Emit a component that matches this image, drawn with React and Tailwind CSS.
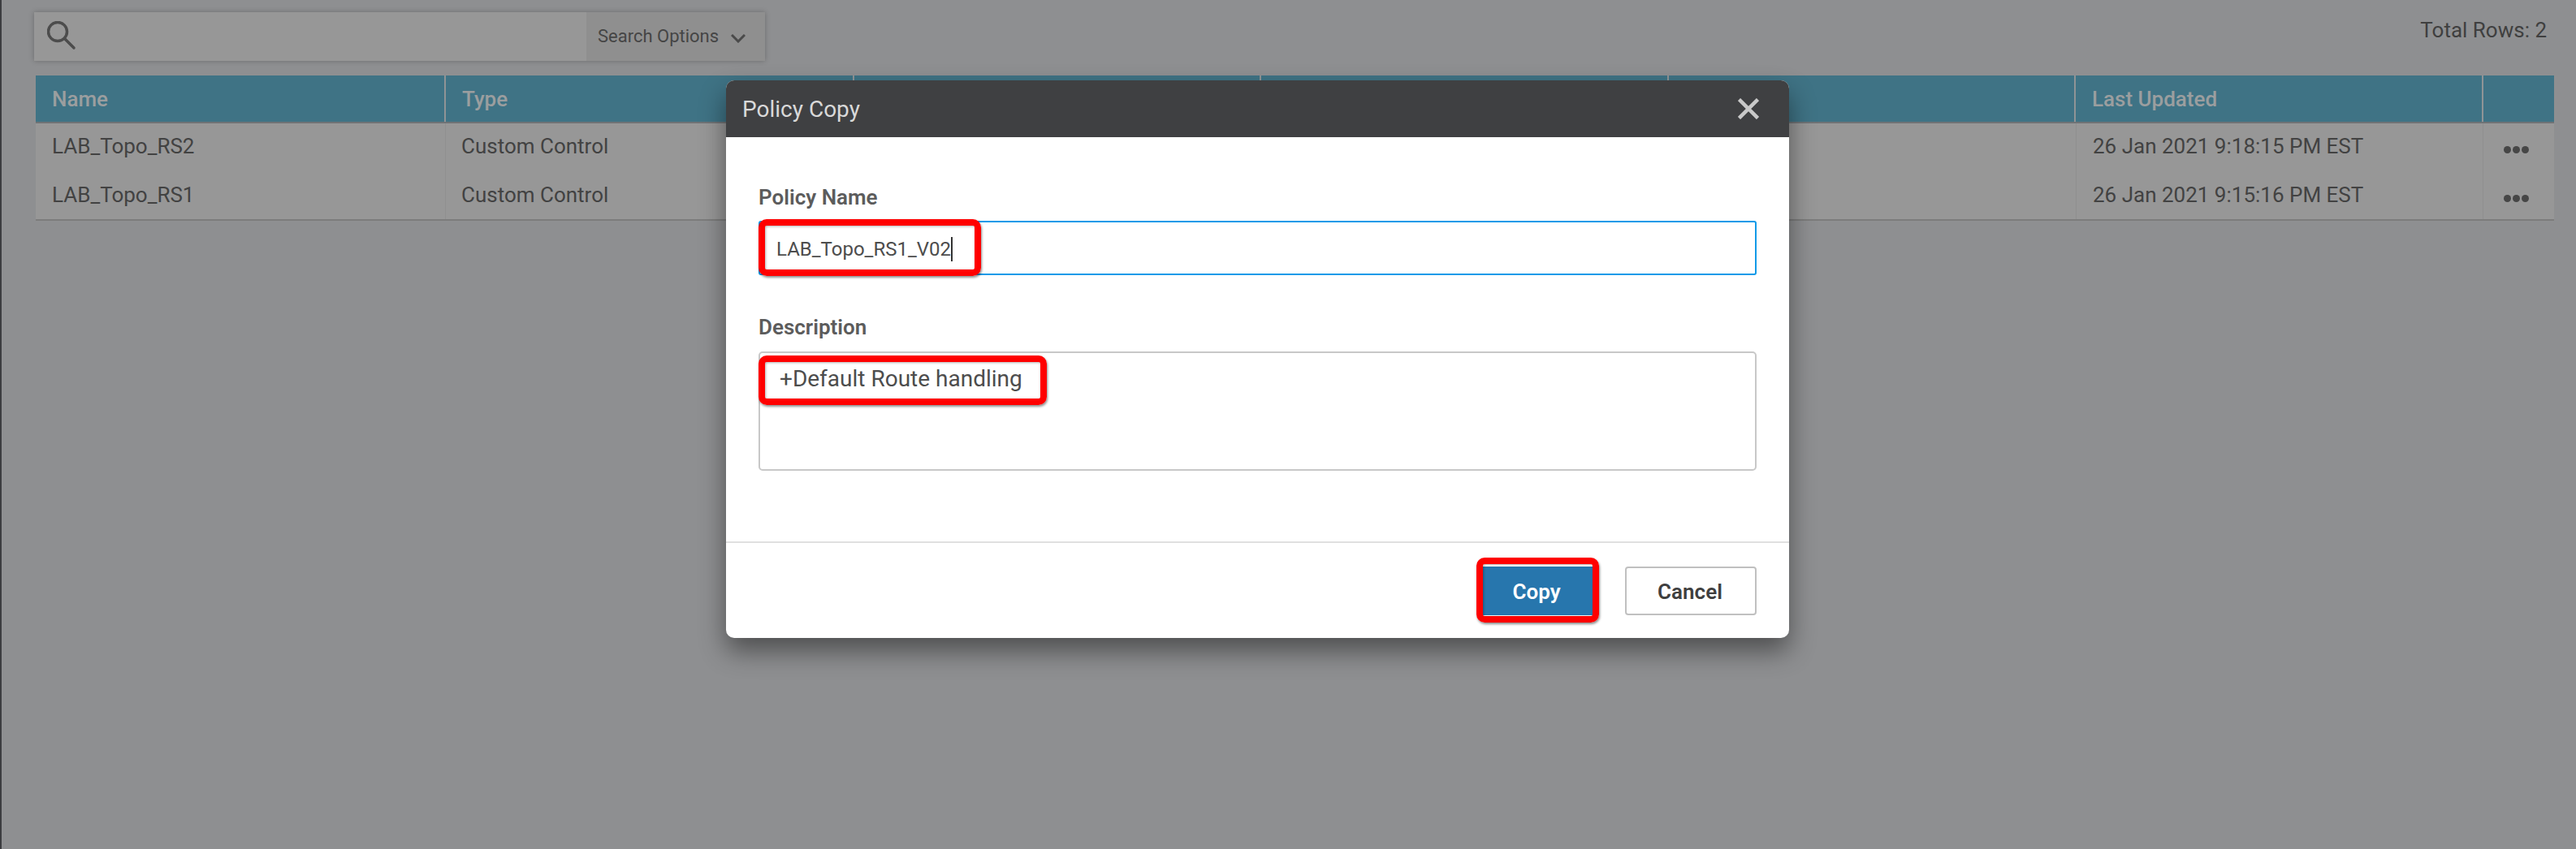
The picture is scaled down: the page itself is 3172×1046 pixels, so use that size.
const columns = ['Name', 'Type', '', '', '', 'Last Updated', '']

const rows = [
  { name: 'LAB_Topo_RS2', type: 'Custom Control', updated: '26 Jan 2021 9:18:15 PM EST' },
  { name: 'LAB_Topo_RS1', type: 'Custom Control', updated: '26 Jan 2021 9:15:16 PM EST' },
]

const grid = 'grid grid-cols-[505px_503px_501px_502px_501px_502px_87px]'

function Callout({ className }) {
  return (
    <div className={`absolute rounded-[10px] border-8 border-[#ff0000] shadow-[1px_2px_3px_rgba(0,0,0,0.45),inset_1px_1px_3px_rgba(0,0,0,0.3)] ${className}`} />
  )
}

function Dots() {
  return (
    <div className="flex gap-[2px] mt-[28px] ml-[25px]">
      <span className="w-[9px] h-[9px] rounded-full bg-[#464646]" />
      <span className="w-[9px] h-[9px] rounded-full bg-[#464646]" />
      <span className="w-[9px] h-[9px] rounded-full bg-[#464646]" />
    </div>
  )
}

export default function App() {
  return (
    <div className="relative w-[3172px] h-[1046px] overflow-hidden bg-[#8e8f91] font-['Roboto',sans-serif] border-l-2 border-[#3c3d40]">
      <div className="pt-[15px] pl-[40px]">
        <div className="flex items-start justify-between pr-[36px]">
          <div className="flex w-[900px] h-[60px] bg-[#979797] shadow-[0_0_6px_rgba(0,0,0,0.25)]">
            <div className="flex-1 flex items-center pl-[16px] pb-[2px]">
              <svg width="36" height="36" viewBox="0 0 36 36" fill="none" stroke="#4c4c4c" strokeWidth="3.5" strokeLinecap="round">
                <circle cx="13" cy="13" r="11.5" />
                <path d="M22 22 L33 33" />
              </svg>
            </div>
            <div className="w-[220px] flex items-center gap-[15px] pl-[14px] pb-[2px] bg-[#8f8f8f] text-[22px] text-[#454545]">
              Search Options
              <svg className="mt-[6px]" width="18" height="11" viewBox="0 0 18 11" fill="none" stroke="#4a4a4a" strokeWidth="3">
                <path d="M1 1 L9 9 L17 1" />
              </svg>
            </div>
          </div>
          <div className="mt-[6px] text-[26px] leading-[32px] text-[#3f3f3f]">Total Rows: 2</div>
        </div>

        <div className="mt-[18px] ml-[2px] w-[3101px]">
          <div className={`${grid} h-[59px] bg-[#3f7385] border-b-2 border-[#6f7376]`}>
            {columns.map((c, i) => (
              <div key={i} className="pl-[20px] pt-[2px] flex items-center text-[26px] font-medium text-[#9b9e9f] border-r-2 border-[#8f9496] last:border-r-0">
                {c}
              </div>
            ))}
          </div>
          {rows.map((r, i) => (
            <div key={r.name} className={`${grid} h-[60px] bg-[#979797] ${i === 1 ? 'border-b-2 border-[#7c7c7c]' : ''}`}>
              <div className="pl-[20px] pt-[12px] text-[26px] leading-[32px] text-[#424242] border-r border-[#8f8f8f]">{r.name}</div>
              <div className="pl-[19px] pt-[12px] text-[26px] leading-[32px] text-[#424242]">{r.type}</div>
              <div />
              <div />
              <div />
              <div className="pl-[20px] pt-[12px] text-[26px] leading-[32px] text-[#424242] border-x border-[#8f8f8f]">{r.updated}</div>
              <Dots />
            </div>
          ))}
        </div>
      </div>

      <div className="absolute left-[892px] top-[99px] w-[1309px] rounded-[10px] bg-white shadow-[0_16px_32px_rgba(0,0,0,0.45)]">
        <div className="h-[70px] rounded-t-[10px] bg-[#3f4042] flex items-center justify-between pl-[20px] pr-[37px] text-[28px] text-[#d9d9d9]">
          <span className="pt-[2px]">Policy Copy</span>
          <svg width="26" height="26" viewBox="0 0 26 26" fill="none" stroke="#c9c9c9" strokeWidth="4.5">
            <path d="M1.5 1.5 L24.5 24.5 M24.5 1.5 L1.5 24.5" />
          </svg>
        </div>

        <div className="relative h-[500px] px-[40px] pt-[56px] border-b-2 border-[#e0e0e0]">
          <div className="text-[26px] leading-[36px] font-semibold text-[#5c5c5c]">Policy Name</div>
          <div className="mt-[11px] h-[67px] flex items-center pl-[20px] pt-[2px] border-2 border-[#0f9ae8] rounded-[3px] text-[24px] text-[#4d4d4d]">
            LAB_Topo_RS1_V02
            <span className="w-[2px] h-[30px] bg-[#333333]" />
          </div>
          <div className="mt-[46px] text-[26px] leading-[36px] font-semibold text-[#5c5c5c]">Description</div>
          <div className="mt-[12px] h-[147px] pl-[24px] pt-[14px] border-2 border-[#c8c8c8] rounded-[5px] text-[28px] leading-[36px] text-[#4d4d4d]">
            +Default Route handling
          </div>
          <Callout className="left-[40px] top-[101px] w-[274px] h-[70px]" />
          <Callout className="left-[40px] top-[269px] w-[355px] h-[61px]" />
        </div>

        <div className="relative h-[117px] flex items-center justify-end gap-[39px] pr-[40px]">
          <button className="w-[136px] h-[60px] pt-[4px] pr-[4px] bg-[#2776ad] text-[26px] font-semibold text-white">Copy</button>
          <button className="w-[162px] h-[60px] pt-[4px] pr-[2px] rounded-[4px] border-2 border-[#c0c0c0] bg-white text-[26px] font-semibold text-[#3f3f3f]">Cancel</button>
          <Callout className="left-[924px] top-[18px] w-[151px] h-[80px]" />
        </div>
      </div>
    </div>
  )
}
